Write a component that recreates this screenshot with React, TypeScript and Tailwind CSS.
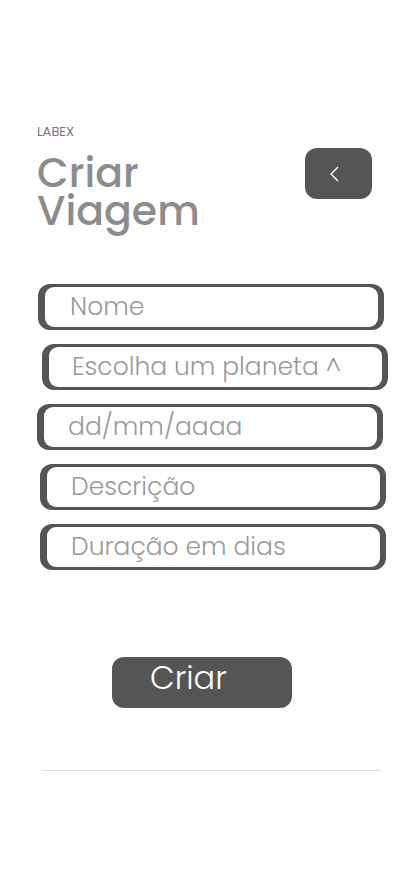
import { useState } from "react";

const campos = [
  { placeholder: "Nome", offset: "ml-[38px]", pad: "pl-[25px]" },
  { placeholder: "Escolha um planeta ^", offset: "ml-[42px]", pad: "pl-[23px]" },
  { placeholder: "dd/mm/aaaa", offset: "ml-[37px]", pad: "pl-[24px]" },
  { placeholder: "Descrição", offset: "ml-[40px]", pad: "pl-[24px]" },
  { placeholder: "Duração em dias", offset: "ml-[40px]", pad: "pl-[24px]" },
];

export default function App() {
  const [valores, setValores] = useState<string[]>(campos.map(() => ""));

  return (
    <div className="min-h-[896px] w-full bg-white font-['Poppins','Roboto',sans-serif]">
      {/* cabeçalho */}
      <header className="flex justify-between pl-[37px] pr-[42px] pt-[124px]">
        <div>
          <p className="text-[13px] leading-[16px] text-[#777]">LABEX</p>
          <h1 className="mt-[14px] text-[41px] leading-[38px] font-medium text-[#8c8c8c]">
            Criar
            <br />
            Viagem
          </h1>
        </div>
        <button className="mt-[24px] flex h-[51px] w-[67px] items-center justify-center rounded-[12px] bg-[#555] pr-[9px]">
          <svg width="9" height="16" viewBox="0 0 9 16" fill="none">
            <polyline points="8,1 1,8 8,15" stroke="white" strokeWidth="1.4" />
          </svg>
        </button>
      </header>

      {/* formulário */}
      <form className="mt-[54px] flex flex-col gap-[14px]" onSubmit={(e) => e.preventDefault()}>
        {campos.map((c, i) => (
          <div
            key={c.placeholder}
            className={`${c.offset} h-[46px] w-[346px] rounded-[12px] bg-[#555] py-[3px] pl-[7px] pr-[6px]`}
          >
            <input
              type="text"
              value={valores[i]}
              placeholder={c.placeholder}
              onChange={(e) => {
                const novos = [...valores];
                novos[i] = e.target.value;
                setValores(novos);
              }}
              className={`${c.pad} h-full w-full rounded-[9px] bg-white text-[25px] font-light text-[#555] outline-none placeholder:text-[#9a9a9a]`}
            />
          </div>
        ))}

        <button
          type="submit"
          className="ml-[112px] mt-[73px] flex h-[51px] w-[180px] items-start self-start rounded-[12px] bg-[#555] pl-[38px] pt-[5px] text-[32px] leading-[32px] font-light text-white"
        >
          Criar
        </button>
      </form>

      <hr className="ml-[42px] mt-[62px] h-px w-[339px] border-0 bg-[#dcdcdc]" />
    </div>
  );
}
